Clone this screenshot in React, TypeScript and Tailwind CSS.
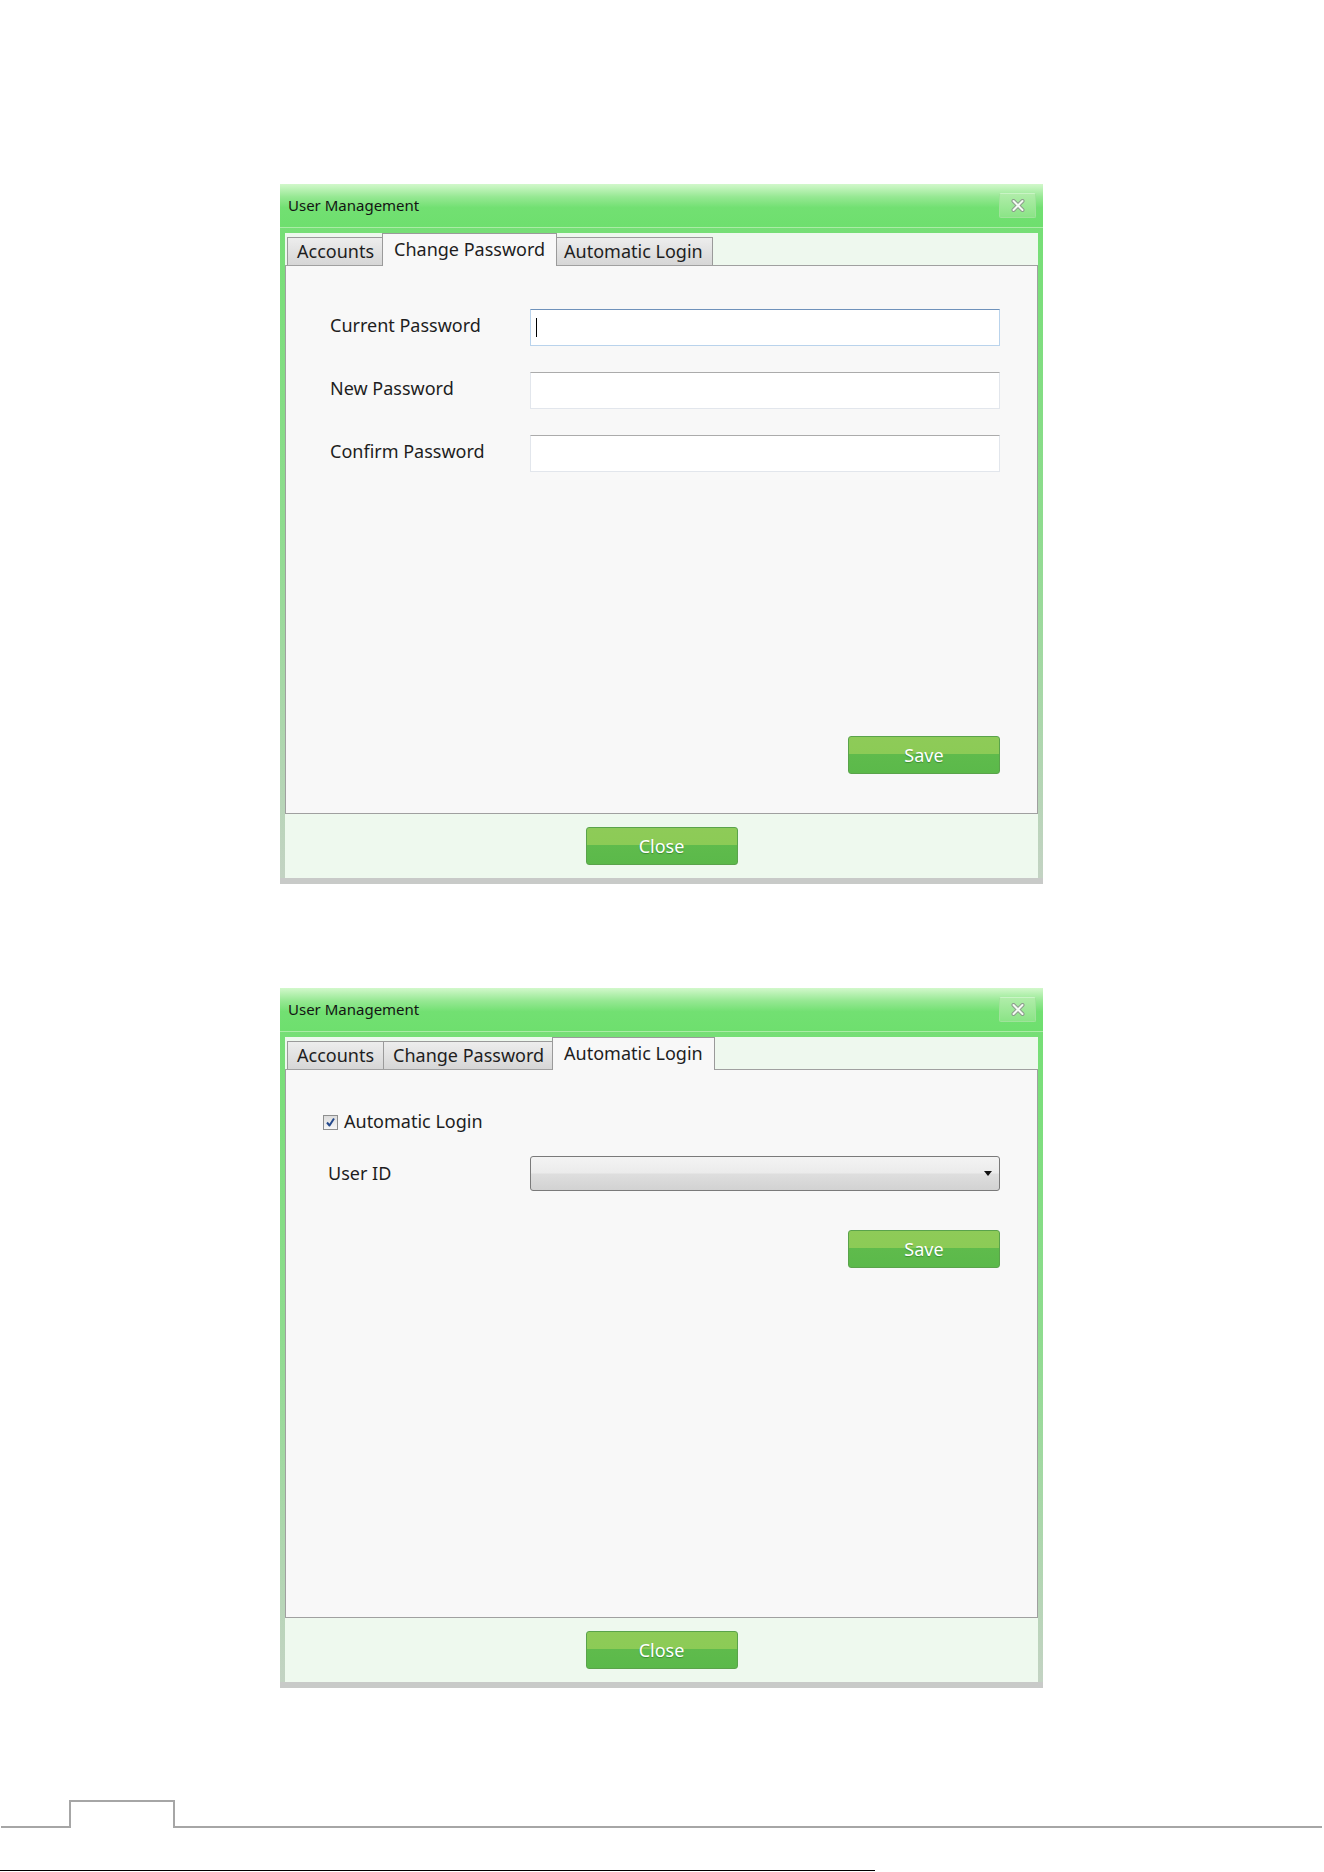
import type { ReactNode } from 'react';

const TABS = ['Accounts', 'Change Password', 'Automatic Login'];

export default function App() {
  return (
    <div className="w-[1324px] h-[1872px] bg-white flex flex-col font-['Noto_Sans',sans-serif] text-[#1e1e1e]">
      <div className="pt-[184px] pl-[280px]">
        <Dialog active={1}>
          <div className="flex-1 flex flex-col pt-[43px] pl-[44px] pr-[37px] pb-[39px]">
            <div className="flex flex-col gap-[26px]">
              <Field label="Current Password" focused />
              <Field label="New Password" />
              <Field label="Confirm Password" />
            </div>
            <div className="mt-auto flex justify-end">
              <GreenButton label="Save" />
            </div>
          </div>
        </Dialog>
      </div>

      <div className="pt-[104px] pl-[280px]">
        <Dialog active={2}>
          <div className="flex-1 flex flex-col pt-[40px] pl-[42px] pr-[37px]">
            <label className="flex items-center h-[24px] -ml-[5px] gap-[6px] text-[18px]">
              <Checkbox />
              <span className="pb-[2px]">Automatic Login</span>
            </label>
            <div className="flex items-center mt-[22px]">
              <span className="w-[202px] text-[18px]">User ID</span>
              <div className="flex-1 h-[35px] rounded-[3px] border border-[#7a7a7a] bg-[linear-gradient(to_bottom,#f3f3f3_0%,#ebebeb_48%,#dedede_52%,#d2d2d2_100%)] flex items-center justify-end pr-[7px]">
                <svg width="8" height="5" viewBox="0 0 8 5">
                  <path d="M0 0 H8 L4 5 Z" fill="#111" />
                </svg>
              </div>
            </div>
            <div className="mt-[39px] flex justify-end">
              <GreenButton label="Save" />
            </div>
          </div>
        </Dialog>
      </div>

      {/* page footer rule */}
      <div className="mt-[112px] flex h-[28px] pl-[1px] pr-[2px]">
        <div className="w-[68px] border-b-2 border-[#a6a6a6]" />
        <div className="w-[106px] border-t-2 border-x-2 border-[#a6a6a6]" />
        <div className="flex-1 border-b-2 border-[#a6a6a6]" />
      </div>
      <div className="mt-[42px] w-[875px] h-px bg-black" />
    </div>
  );
}

function Dialog({ active, children }: { active: number; children: ReactNode }) {
  return (
    <div className="w-[763px] h-[700px] flex flex-col bg-[linear-gradient(to_bottom,#72df72_0%,#8fdc8f_50%,#c3d3c3_100%)] border-b-[6px] border-[#c8cac8]">
      <div className="h-[43px] flex items-center justify-between pl-[8px] pr-[7px] bg-[linear-gradient(to_bottom,#d2f8cb_0%,#96e893_30%,#72e072_55%,#6edf6e_100%)]">
        <span className="text-[15px] text-[#141414]">User Management</span>
        <button className="w-[37px] h-[25px] rounded-[2px] border border-[#9fe39a] border-t-[#c9f4c5] bg-[linear-gradient(to_bottom,#b0eda9,#8be487)] flex items-center justify-center">
          <svg width="14" height="13" viewBox="0 0 14 13">
            <path d="M2.5 2 L11.5 11 M11.5 2 L2.5 11" stroke="#8c9a8c" strokeWidth="4" strokeLinecap="round" />
            <path d="M2.5 2 L11.5 11 M11.5 2 L2.5 11" stroke="#f4fbf3" strokeWidth="2" strokeLinecap="round" />
          </svg>
        </button>
      </div>
      <div className="h-px bg-[#aaeca6]" />
      <div className="flex-1 flex flex-col pt-[5px] px-[5px]">
        <div className="h-[32px] flex items-end pl-[2px] bg-[#eef8ee]">
          {TABS.map((t, i) =>
            i === active ? (
              <div
                key={t}
                className="relative z-10 -mx-[2px] -mb-px h-[33px] px-[11px] pt-[2px] border border-b-0 border-[#9a9a9a] bg-[#f8f8f8] text-[18px] leading-[26px]"
              >
                {t}
              </div>
            ) : (
              <div
                key={t}
                className="h-[28px] px-[9px] -ml-px first:ml-0 border border-b-0 border-[#9a9a9a] bg-[linear-gradient(to_bottom,#ededed,#d6d6d6)] text-[18px] leading-[27px]"
              >
                {t}
              </div>
            )
          )}
        </div>
        <div className="h-[549px] flex flex-col border border-[#a0a0a0] bg-[#f8f8f8]">{children}</div>
        <div className="flex-1 flex items-center justify-center bg-[#eef9ee]">
          <GreenButton label="Close" />
        </div>
      </div>
    </div>
  );
}

function Field({ label, focused }: { label: string; focused?: boolean }) {
  return (
    <div className="flex items-center h-[37px]">
      <span className="w-[200px] text-[18px] pb-[4px]">{label}</span>
      <div
        className={
          focused
            ? 'flex-1 h-full bg-white border border-[#b9d3ec] border-t-[#6f92bb] flex items-center pl-[5px]'
            : 'flex-1 h-full bg-white border border-[#e2e6ec] border-t-[#ababab]'
        }
      >
        {focused && <div className="w-px h-[19px] bg-black" />}
      </div>
    </div>
  );
}

function GreenButton({ label }: { label: string }) {
  return (
    <button className="w-[152px] h-[38px] rounded-[3px] border border-[#5aa34b] bg-[linear-gradient(to_bottom,#8ecb58_0%,#8ccb56_46%,#5fbb4c_48%,#5bb94a_100%)] text-white text-[18px] leading-none [text-shadow:0_1px_1px_rgba(0,60,0,0.35)]">
      {label}
    </button>
  );
}

function Checkbox() {
  return (
    <span className="w-[15px] h-[15px] border border-[#8e8f8f] bg-[linear-gradient(to_bottom,#dcdcdc,#f7f7f7)] flex items-center justify-center">
      <svg width="11" height="11" viewBox="0 0 11 11">
        <path d="M2 5.5 L4.5 8.5 L9 1.5" stroke="#24498c" strokeWidth="2" fill="none" strokeLinejoin="round" />
      </svg>
    </span>
  );
}
